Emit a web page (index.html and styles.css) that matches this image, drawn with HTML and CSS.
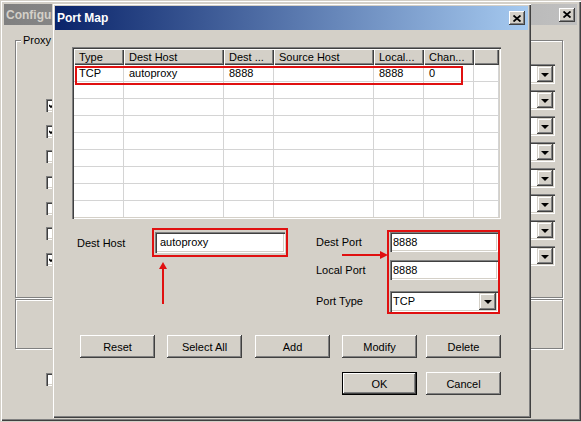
FILE: index.html
```html
<!DOCTYPE html>
<html>
<head>
<meta charset="utf-8">
<link rel="stylesheet" href="styles.css">
</head>
<body>
<div class="bgwin">
  <div class="bgtitle">
    <span class="bgtitle-text">Configuration</span>
    <span class="tbtn bgclose"><svg width="8" height="7" viewBox="0 0 8 7"><path d="M0.5 0.5 L7.5 6.5 M7.5 0.5 L0.5 6.5" stroke="#000" stroke-width="1.8"/></svg></span>
  </div>
  <div class="bgbody">
    <div class="group proxy">
      <span class="legend">Proxy</span>
      <div class="checks">
        <span class="cb checked"><svg width="7" height="7" viewBox="0 0 7 7"><path d="M0 3 L2 5 L6 1" stroke="#000" stroke-width="1.6" fill="none"/></svg></span>
        <span class="cb checked"><svg width="7" height="7" viewBox="0 0 7 7"><path d="M0 3 L2 5 L6 1" stroke="#000" stroke-width="1.6" fill="none"/></svg></span>
        <span class="cb"></span>
        <span class="cb"></span>
        <span class="cb"></span>
        <span class="cb"></span>
        <span class="cb checked"><svg width="7" height="7" viewBox="0 0 7 7"><path d="M0 3 L2 5 L6 1" stroke="#000" stroke-width="1.6" fill="none"/></svg></span>
      </div>
      <div class="combos">
        <div class="combo bgcombo"><span class="ddbtn"><span class="tri"></span></span></div>
        <div class="combo bgcombo"><span class="ddbtn"><span class="tri"></span></span></div>
        <div class="combo bgcombo"><span class="ddbtn"><span class="tri"></span></span></div>
        <div class="combo bgcombo"><span class="ddbtn"><span class="tri"></span></span></div>
        <div class="combo bgcombo"><span class="ddbtn"><span class="tri"></span></span></div>
        <div class="combo bgcombo"><span class="ddbtn"><span class="tri"></span></span></div>
        <div class="combo bgcombo"><span class="ddbtn"><span class="tri"></span></span></div>
        <div class="combo bgcombo"><span class="ddbtn"><span class="tri"></span></span></div>
      </div>
    </div>
    <div class="group second"></div>
    <span class="cb bottom-cb"></span>
  </div>
</div>

<div class="dialog">
  <div class="titlebar">
    <span class="title">Port Map</span>
    <span class="tbtn close"><svg width="8" height="7" viewBox="0 0 8 7"><path d="M0.5 0.5 L7.5 6.5 M7.5 0.5 L0.5 6.5" stroke="#000" stroke-width="1.8"/></svg></span>
  </div>
  <div class="dlgbody">
    <div class="listview">
      <div class="lvgrid">
        <div class="hd">Type</div>
        <div class="hd">Dest Host</div>
        <div class="hd">Dest ...</div>
        <div class="hd">Source Host</div>
        <div class="hd">Local...</div>
        <div class="hd">Chan...</div>
        <div class="hd"></div>

        <div class="cell">TCP</div><div class="cell">autoproxy</div><div class="cell">8888</div><div class="cell"></div><div class="cell">8888</div><div class="cell">0</div><div class="cell"></div>
        <div class="cell"></div><div class="cell"></div><div class="cell"></div><div class="cell"></div><div class="cell"></div><div class="cell"></div><div class="cell"></div>
        <div class="cell"></div><div class="cell"></div><div class="cell"></div><div class="cell"></div><div class="cell"></div><div class="cell"></div><div class="cell"></div>
        <div class="cell"></div><div class="cell"></div><div class="cell"></div><div class="cell"></div><div class="cell"></div><div class="cell"></div><div class="cell"></div>
        <div class="cell"></div><div class="cell"></div><div class="cell"></div><div class="cell"></div><div class="cell"></div><div class="cell"></div><div class="cell"></div>
        <div class="cell"></div><div class="cell"></div><div class="cell"></div><div class="cell"></div><div class="cell"></div><div class="cell"></div><div class="cell"></div>
        <div class="cell"></div><div class="cell"></div><div class="cell"></div><div class="cell"></div><div class="cell"></div><div class="cell"></div><div class="cell"></div>
        <div class="cell"></div><div class="cell"></div><div class="cell"></div><div class="cell"></div><div class="cell"></div><div class="cell"></div><div class="cell"></div>
        <div class="cell"></div><div class="cell"></div><div class="cell"></div><div class="cell"></div><div class="cell"></div><div class="cell"></div><div class="cell"></div>
      </div>
      <div class="hl"></div>
    </div>

    <div class="form">
      <div class="fleft">
        <span class="flabel host-label">Dest Host</span>
        <div class="redbox host-box">
          <div class="edit host-edit">autoproxy</div>
        </div>
      </div>
      <div class="fright">
        <div class="rlabels">
          <span class="rlabel r1">Dest Port</span>
          <span class="rlabel r2">Local Port</span>
          <span class="rlabel r3">Port Type</span>
        </div>
        <div class="redbox port-box">
          <div class="edit port-edit">8888</div>
          <div class="edit port-edit second-edit">8888</div>
          <div class="combo port-combo"><span class="combo-text">TCP</span><span class="ddbtn"><span class="tri"></span></span></div>
        </div>
      </div>
    </div>

    <div class="buttons">
      <div class="btn c1">Reset</div>
      <div class="btn c2">Select All</div>
      <div class="btn c3">Add</div>
      <div class="btn c4">Modify</div>
      <div class="btn c5">Delete</div>
      <div class="btn default c4">OK</div>
      <div class="btn c5">Cancel</div>
    </div>

    <svg class="arrow up-arrow" width="10" height="42" viewBox="0 0 10 42">
      <polygon points="5,0 1,7 9,7" fill="#e01010"/>
      <rect x="4" y="6" width="2" height="36" fill="#e01010"/>
    </svg>
    <svg class="arrow right-arrow" width="46" height="10" viewBox="0 0 46 10">
      <rect x="0" y="4" width="40" height="2" fill="#e01010"/>
      <polygon points="46,5 38,1 38,9" fill="#e01010"/>
    </svg>
  </div>
</div>
</body>
</html>
```

FILE: styles.css
```css
* { box-sizing: border-box; }

body {
  margin: 0;
  width: 581px;
  height: 422px;
  overflow: hidden;
  position: relative;
  background: #d4d0c8;
  font-family: "Liberation Sans", Arial, sans-serif;
  font-size: 11px;
  color: #000;
}

/* ---------- background window ---------- */
.bgwin {
  position: absolute;
  left: 0;
  top: 0;
  width: 581px;
  height: 421px;
  padding: 4px;
  background: #d4d0c8;
  box-shadow: inset 1px 1px #d4d0c8, inset 2px 2px #fff, inset -1px -1px #404040, inset -2px -2px #808080;
}

.bgtitle {
  height: 21px;
  display: flex;
  align-items: center;
  justify-content: space-between;
  padding: 0 2px 0 2px;
  background: linear-gradient(to right, #808080, #c0c0c0);
  color: #d4d0c8;
  font-weight: bold;
  font-size: 12px;
}

.bgtitle-text {
  width: 46px;
  overflow: hidden;
  white-space: nowrap;
}

.tbtn {
  width: 16px;
  height: 14px;
  display: flex;
  align-items: center;
  justify-content: center;
  background: #d4d0c8;
  box-shadow: inset -1px -1px #404040, inset 1px 1px #fff, inset -2px -2px #808080;
}

.bgbody {
  padding: 15px 14px 0 11px;
}

.group {
  position: relative;
  border: 1px solid #808080;
  box-shadow: inset 1px 1px #fff, 1px 1px #fff;
}

.proxy {
  height: 258px;
  display: flex;
  justify-content: space-between;
  align-items: flex-start;
}

.legend {
  position: absolute;
  top: -8px;
  left: 5px;
  padding: 0 2px;
  background: #d4d0c8;
  font-size: 11px;
  line-height: 14px;
}

.checks {
  display: flex;
  flex-direction: column;
  gap: 12.67px;
  margin: 58px 0 0 30px;
}

.cb {
  width: 13px;
  height: 13px;
  display: flex;
  align-items: center;
  justify-content: center;
  background: #fff;
  box-shadow: inset 1px 1px #808080, inset 2px 2px #404040, inset -1px -1px #fff, inset -2px -2px #d4d0c8;
}

.bottom-cb {
  display: flex;
  margin: 24px 0 0 31px;
}

.combos {
  display: flex;
  flex-direction: column;
  gap: 6px;
  margin: 23px 7px 0 0;
}

.combo {
  display: flex;
  justify-content: flex-end;
  align-items: stretch;
  padding: 2px;
  background: #fff;
  box-shadow: inset 1px 1px #808080, inset 2px 2px #404040, inset -1px -1px #fff, inset -2px -2px #d4d0c8;
}

.bgcombo {
  width: 120px;
  height: 20px;
}

.ddbtn {
  width: 16px;
  display: flex;
  align-items: center;
  justify-content: center;
  background: #d4d0c8;
  box-shadow: inset -1px -1px #404040, inset 1px 1px #d4d0c8, inset -2px -2px #808080, inset 2px 2px #fff;
}

.tri {
  width: 0;
  height: 0;
  border-left: 4px solid transparent;
  border-right: 4px solid transparent;
  border-top: 4px solid #000;
  margin-top: 1px;
}

.second {
  height: 50px;
  margin-top: 1px;
}

/* ---------- dialog ---------- */
.dialog {
  position: absolute;
  left: 52px;
  top: 3px;
  width: 479px;
  height: 415px;
  padding: 3px;
  background: #d4d0c8;
  box-shadow: inset 1px 1px #d4d0c8, inset 2px 2px #fff, inset -1px -1px #404040, inset -2px -2px #808080;
}

.titlebar {
  height: 24px;
  display: flex;
  align-items: center;
  justify-content: space-between;
  padding: 0 3px 0 2px;
  background: linear-gradient(to right, #0a246a, #a6caf0);
}

.title {
  color: #fff;
  font-weight: bold;
  font-size: 12px;
}

.dlgbody {
  position: relative;
  padding: 17px 0 0 17px;
}

.listview {
  position: relative;
  width: 429px;
  height: 172px;
  padding: 2px;
  background: #fff;
  box-shadow: inset 1px 1px #808080, inset 2px 2px #404040, inset -1px -1px #fff, inset -2px -2px #d4d0c8;
}

.lvgrid {
  height: 100%;
  overflow: hidden;
  display: grid;
  grid-template-columns: 50px 100px 50px 100px 50px 50px 1fr;
  grid-template-rows: 16px;
  grid-auto-rows: 17px;
}

.hd {
  background: #d4d0c8;
  padding: 0 0 0 5px;
  line-height: 17px;
  white-space: nowrap;
  overflow: hidden;
  box-shadow: inset 1px 1px #fff, inset -1px -1px #404040, inset -2px -2px #808080;
}

.cell {
  background: #fff;
  padding-left: 5px;
  line-height: 17px;
  border-right: 1px solid #d4d4d4;
  border-bottom: 1px solid #d4d4d4;
  white-space: nowrap;
}

.hl {
  position: absolute;
  left: 3px;
  top: 19px;
  width: 388px;
  height: 19px;
  border: 2px solid #e01010;
}

.form {
  display: flex;
  margin-top: 9px;
  height: 86px;
}

.fleft {
  display: flex;
  align-items: center;
  align-self: flex-start;
  margin-left: 5px;
}

.flabel {
  width: 75px;
}

.redbox {
  border: 2px solid #e01010;
}

.host-box {
  padding: 2px 1px;
}

.edit {
  background: #fff;
  box-shadow: inset 1px 1px #808080, inset 2px 2px #404040, inset -1px -1px #fff, inset -2px -2px #d4d0c8;
  white-space: nowrap;
}

.host-edit {
  width: 130px;
  height: 21px;
  line-height: 21px;
  padding-left: 5px;
}

.fright {
  display: flex;
  margin: 2px 0 0 28px;
}

.rlabels {
  width: 71px;
  display: flex;
  flex-direction: column;
  padding-top: 2px;
}

.rlabel {
  line-height: 20px;
}

.r2 { margin-top: 8px; }
.r3 { margin-top: 11px; line-height: 21px; }

.port-box {
  width: 113px;
  padding: 0 0 0 1px;
  display: flex;
  flex-direction: column;
}

.port-edit {
  width: 108px;
  height: 20px;
  line-height: 20px;
  padding-left: 3px;
}

.second-edit { margin-top: 8px; }

.port-combo {
  width: 108px;
  height: 21px;
  margin-top: 11px;
  justify-content: space-between;
}

.combo-text {
  line-height: 17px;
  padding-left: 1px;
}

.port-combo .ddbtn {
  width: 17px;
}

.buttons {
  display: grid;
  grid-template-columns: 87px 88px 87px 84px 75px;
  row-gap: 14px;
  margin: 21px 0 0 8px;
}

.btn {
  width: 75px;
  height: 23px;
  display: flex;
  align-items: center;
  justify-content: center;
  background: #d4d0c8;
  box-shadow: inset -1px -1px #404040, inset 1px 1px #fff, inset -2px -2px #808080, inset 2px 2px #d4d0c8;
}

.btn.default {
  box-shadow: inset 0 0 0 1px #000, inset -2px -2px #404040, inset 2px 2px #fff, inset -3px -3px #808080;
}

.c1 { grid-column: 1; }
.c2 { grid-column: 2; }
.c3 { grid-column: 3; }
.c4 { grid-column: 4; }
.c5 { grid-column: 5; }

.arrow {
  position: absolute;
}

.up-arrow {
  left: 103px;
  top: 232px;
}

.right-arrow {
  left: 287px;
  top: 220px;
}
```
